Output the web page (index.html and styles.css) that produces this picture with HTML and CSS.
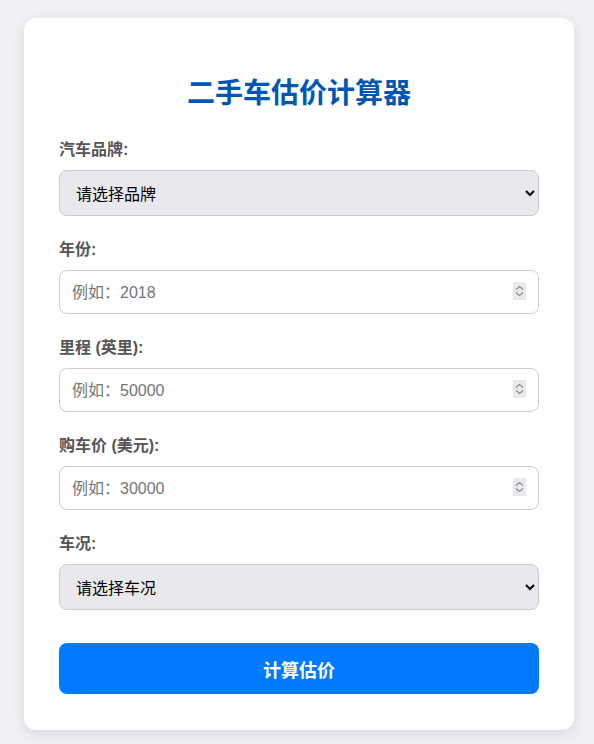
FILE: index.html
```html
<!DOCTYPE html>
<html lang="zh">
<head>
<meta charset="utf-8">
<title>二手车估价计算器</title>
<link rel="stylesheet" href="styles.css">
</head>
<body>
<div class="card">
  <h1 class="title">二手车估价计算器</h1>
  <div class="field">
    <label class="label" for="brand">汽车品牌:</label>
    <select id="brand" class="control select">
      <option>请选择品牌</option>
    </select>
  </div>
  <div class="field">
    <label class="label" for="year">年份:</label>
    <div class="num">
      <input id="year" class="control input" type="number" placeholder="例如：2018">
      <svg class="spin" width="13" height="18" viewBox="0 0 13 18" aria-hidden="true"><path d="M3 7.5 L6.5 4.5 L10 7.5 M3 10.5 L6.5 13.5 L10 10.5" fill="none" stroke="#8a8a8a" stroke-width="1.1"/></svg>
    </div>
  </div>
  <div class="field">
    <label class="label" for="miles">里程 (英里):</label>
    <div class="num">
      <input id="miles" class="control input" type="number" placeholder="例如：50000">
      <svg class="spin" width="13" height="18" viewBox="0 0 13 18" aria-hidden="true"><path d="M3 7.5 L6.5 4.5 L10 7.5 M3 10.5 L6.5 13.5 L10 10.5" fill="none" stroke="#8a8a8a" stroke-width="1.1"/></svg>
    </div>
  </div>
  <div class="field">
    <label class="label" for="price">购车价 (美元):</label>
    <div class="num">
      <input id="price" class="control input" type="number" placeholder="例如：30000">
      <svg class="spin" width="13" height="18" viewBox="0 0 13 18" aria-hidden="true"><path d="M3 7.5 L6.5 4.5 L10 7.5 M3 10.5 L6.5 13.5 L10 10.5" fill="none" stroke="#8a8a8a" stroke-width="1.1"/></svg>
    </div>
  </div>
  <div class="field">
    <label class="label" for="cond">车况:</label>
    <select id="cond" class="control select">
      <option>请选择车况</option>
    </select>
  </div>
  <button class="btn" type="button">计算估价</button>
</div>
</body>
</html>
```

FILE: styles.css
```css
html, body {
  margin: 0;
  background: #f0f1f5;
}
body {
  padding: 18px 20px 14px 24px;
  font-family: "Liberation Sans", Arial, "Noto Sans CJK SC", sans-serif;
}
.card {
  max-width: 550px;
  box-sizing: border-box;
  background: #fff;
  border-radius: 12px;
  padding: 35px 35px 36px;
  box-shadow: 0 4px 14px rgba(0, 0, 0, 0.1);
}
.title {
  margin: 21px 0 24px;
  font-size: 28px;
  line-height: 40px;
  font-weight: bold;
  text-align: center;
  color: #0056b3;
}
.field {
  margin-bottom: 22px;
}
.label {
  display: block;
  font-size: 16px;
  line-height: 24px;
  font-weight: bold;
  color: #555;
  margin-bottom: 8px;
}
.control {
  display: block;
  width: 100%;
  box-sizing: border-box;
  font-family: "Liberation Sans", Arial, "Noto Sans CJK SC", sans-serif;
  font-size: 16px;
  border: 1px solid #ccc;
  border-radius: 8px;
  padding: 2px 12px 0;
  margin: 0;
}
.num {
  position: relative;
}
.input {
  height: 44px;
  background: #fff;
  color: #333;
  -moz-appearance: textfield;
}
.input::placeholder {
  color: #757575;
}
.input::-webkit-inner-spin-button,
.input::-webkit-outer-spin-button {
  -webkit-appearance: none;
  margin: 0;
}
.spin {
  position: absolute;
  right: 13px;
  top: 12px;
  background: #e9e9ed;
  pointer-events: none;
}
.select {
  height: 46px;
  color: #000;
  background-color: #e9e9ed;
}
.btn {
  display: block;
  width: 100%;
  height: 51px;
  margin-top: 33px;
  border: none;
  border-radius: 8px;
  background: #007bff;
  color: #fff;
  font-family: "Liberation Sans", Arial, "Noto Sans CJK SC", sans-serif;
  font-size: 18px;
  font-weight: bold;
}
```
